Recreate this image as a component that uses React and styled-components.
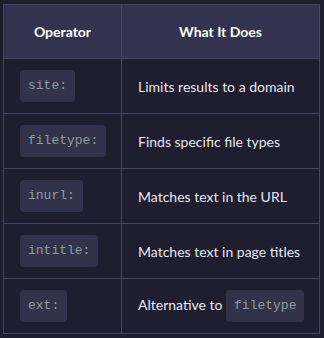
import React from "react";
import styled, { createGlobalStyle } from "styled-components";

const GlobalStyle = createGlobalStyle`
  html, body {
    margin: 0;
    background-color: #1e1e2e;
  }
  body {
    padding: 4px 3px;
    font-family: Lato, "Noto Sans", sans-serif;
  }
`;

const Table = styled.table`
  width: 317px;
  table-layout: fixed;
  border-collapse: collapse;
  border: 1px solid #46465f;
  font-size: 14px;
  color: #e6e6f2;
`;

const HeadCell = styled.th`
  box-sizing: border-box;
  height: 54px;
  padding: 0 16px;
  background-color: #33334f;
  border: 1px solid #46465f;
  color: #ffffff;
  font-weight: 700;
  text-align: center;
  width: ${(p) => p.$width || "auto"};
`;

const Cell = styled.td`
  box-sizing: border-box;
  height: 55px;
  padding: 0 16px;
  border: 1px solid #46465f;
  text-align: left;
  vertical-align: middle;
  white-space: nowrap;
`;

const Code = styled.code`
  display: inline-block;
  padding: 6px 8px;
  border-radius: 4px;
  background-color: #32324a;
  color: #8e9ba2;
  font-family: "Liberation Mono", "DejaVu Sans Mono", monospace;
  font-size: 13px;
  line-height: 20px;
  vertical-align: middle;
`;

const rows = [
  { op: "site:", desc: "Limits results to a domain" },
  { op: "filetype:", desc: "Finds specific file types" },
  { op: "inurl:", desc: "Matches text in the URL" },
  { op: "intitle:", desc: "Matches text in page titles" },
  { op: "ext:", desc: "Alternative to", code: "filetype" },
];

export default function App() {
  return (
    <>
      <GlobalStyle />
      <Table>
        <thead>
          <tr>
            <HeadCell $width="118px">Operator</HeadCell>
            <HeadCell>What It Does</HeadCell>
          </tr>
        </thead>
        <tbody>
          {rows.map((r) => (
            <tr key={r.op}>
              <Cell>
                <Code>{r.op}</Code>
              </Cell>
              <Cell>
                {r.desc}
                {r.code && (
                  <>
                    {" "}
                    <Code>{r.code}</Code>
                  </>
                )}
              </Cell>
            </tr>
          ))}
        </tbody>
      </Table>
    </>
  );
}
